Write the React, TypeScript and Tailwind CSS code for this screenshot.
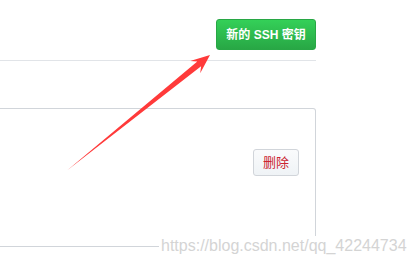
export default function App() {
  return (
    <div className="relative h-[266px] w-[413px] overflow-hidden bg-white font-['Liberation_Sans','Noto_Sans_CJK_SC',sans-serif]">
      <div className="w-[316px]">
        <div className="flex h-[61px] items-start justify-end border-b border-[#e1e4e8] pt-[19px]">
          <button className="h-[31px] w-[100px] rounded-[3px] border border-[#28a745] bg-gradient-to-b from-[#34d058] to-[#28a745] text-[12px] font-bold text-white">
            新的 SSH 密钥
          </button>
        </div>
        <div className="mt-[47px] h-[139px] rounded-r-[3px] border border-l-0 border-[#d1d5da] pr-[16px] pt-[40px]">
          <div className="flex justify-end">
            <button className="h-[27px] w-[46px] rounded-[3px] border border-[#d1d5da] bg-gradient-to-b from-[#fafbfc] to-[#eff3f6] text-[13px] text-[#cb2431]">
              删除
            </button>
          </div>
        </div>
      </div>

      <svg className="pointer-events-none absolute left-0 top-0" width="413" height="266" viewBox="0 0 413 266">
        <polygon
          points="67,170.5 201.1,66.3 200.2,73.2 210,55 190.2,61.0 197.3,61.4"
          fill="#ff3a3a"
        />
      </svg>

      <div className="absolute left-[159px] top-[236px] bg-white px-[2px] text-[16px] leading-[20px] text-[#d4d4d4]">
        https://blog.csdn.net/qq_42244734
      </div>
    </div>
  );
}
